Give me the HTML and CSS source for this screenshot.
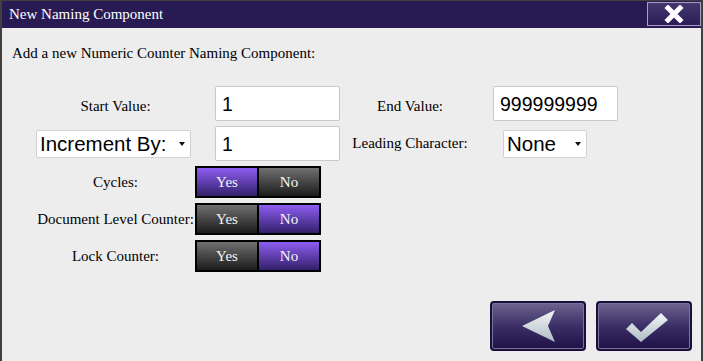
FILE: index.html
```html
<!DOCTYPE html>
<html lang="en">
  <head>
    <meta charset="UTF-8" />
    <title>New Naming Component</title>
    <link rel="stylesheet" href="styles.css">
  </head>
  <body>
    <div class="dialog">
      <div class="titlebar">
        <span class="title">New Naming Component</span>
        <button class="close-btn" title="Close">
          <svg width="20" height="18" viewBox="0 0 20 18">
            <path d="M4 3 L16 15 M16 3 L4 15" stroke="#fff" stroke-width="5" stroke-linecap="square" />
          </svg>
        </button>
      </div>

      <div class="content">
        <p class="intro">Add a new Numeric Counter Naming Component:</p>

        <div class="form-grid">
          <label class="lbl lbl-low">Start Value:</label>
          <input class="num-input" type="text" value="1" />
          <label class="lbl lbl-right lbl-low">End Value:</label>
          <input class="num-input num-last" type="text" value="999999999" />

          <div class="select-wrap select-wide">
            <select>
              <option>Increment By:</option>
              <option>Decrement By:</option>
            </select>
          </div>
          <input class="num-input" type="text" value="1" />
          <label class="lbl lbl-right">Leading Character:</label>
          <div class="select-wrap select-small">
            <select>
              <option>None</option>
              <option>0</option>
            </select>
          </div>

          <label class="lbl">Cycles:</label>
          <div class="toggle">
            <button class="on">Yes</button>
            <button>No</button>
          </div>

          <label class="lbl">Document Level Counter:</label>
          <div class="toggle">
            <button>Yes</button>
            <button class="on">No</button>
          </div>

          <label class="lbl">Lock Counter:</label>
          <div class="toggle">
            <button>Yes</button>
            <button class="on">No</button>
          </div>
        </div>
      </div>

      <div class="footer">
        <button class="big-btn" title="Back">
          <svg width="92" height="46" viewBox="0 0 92 46">
            <defs>
              <linearGradient id="gBack" x1="0" y1="0" x2="0" y2="1">
                <stop offset="0" stop-color="#f2f6f8" />
                <stop offset="1" stop-color="#aebcc4" />
              </linearGradient>
            </defs>
            <polygon points="30,23 63,7 56,23 63,39" fill="url(#gBack)" />
          </svg>
        </button>
        <button class="big-btn" title="OK">
          <svg width="92" height="46" viewBox="0 0 92 46">
            <defs>
              <linearGradient id="gOk" x1="0" y1="0" x2="0" y2="1">
                <stop offset="0" stop-color="#f2f6f8" />
                <stop offset="1" stop-color="#aebcc4" />
              </linearGradient>
            </defs>
            <polygon points="28,26 34,20 43,29 63,10 70,17 43,39" fill="url(#gOk)" />
          </svg>
        </button>
      </div>
    </div>
  </body>
</html>
```

FILE: styles.css
```css
body {
  margin: 0;
  background-color: #404040;
  font-family: "Liberation Serif", "Times New Roman", serif;
}

.dialog {
  margin: 1px 0 0 2px;
  width: 699px;
  height: 360px;
  background: #ededed;
  display: flex;
  flex-direction: column;
}

.titlebar {
  height: 27px;
  background: #281a52;
  display: flex;
  justify-content: space-between;
  align-items: flex-start;
}

.title {
  color: white;
  font-size: 15px;
  padding: 5px 0 0 7px;
}

.close-btn {
  margin-top: 1px;
  width: 54px;
  height: 24px;
  border: 1px solid #a79ec0;
  background: linear-gradient(#43376e, #2b1e57);
  padding: 0;
  display: flex;
  align-items: center;
  justify-content: center;
  cursor: pointer;
}

.content {
  padding: 17px 0 0 10px;
}

.intro {
  margin: 0;
  font-size: 15px;
}

.form-grid {
  margin-top: 24px;
  margin-left: 24px;
  display: grid;
  grid-template-columns: 159px 155px 143px auto;
  row-gap: 5px;
  align-items: center;
}

.lbl {
  font-size: 15px;
  text-align: center;
  white-space: nowrap;
}

.lbl-low {
  padding-top: 5px;
}

.lbl-right {
  padding-right: 23px;
}

.num-input {
  box-sizing: border-box;
  height: 35px;
  width: 125px;
  margin-left: 20px;
  border: 1px solid #c9c9c9;
  border-radius: 2px;
  background: white;
  padding: 2px 6px 0;
  font-family: "Liberation Sans", Arial, sans-serif;
  font-size: 19.5px;
  color: #000;
  outline: none;
}

.num-last {
  margin-left: 0;
}

.select-wrap {
  position: relative;
  box-sizing: border-box;
  height: 28px;
}

.select-wrap select {
  appearance: none;
  -webkit-appearance: none;
  box-sizing: border-box;
  width: 100%;
  height: 100%;
  border: 1px solid #d0d0d0;
  border-radius: 2px;
  background: white;
  padding: 0 3px;
  font-family: "Liberation Sans", Arial, sans-serif;
  font-size: 20.5px;
  color: #000;
  outline: none;
}

.select-wrap::after {
  content: "";
  position: absolute;
  right: 6px;
  top: 12px;
  border-left: 3.5px solid transparent;
  border-right: 3.5px solid transparent;
  border-top: 4px solid #111;
  pointer-events: none;
}

.select-wide {
  width: 155px;
}

.select-small {
  width: 84px;
  margin-left: 10px;
}

.toggle {
  grid-column: 2 / -1;
  justify-self: start;
  display: flex;
  width: 126px;
  height: 32px;
  box-sizing: border-box;
  border: 2px solid #000;
  background: #000;
  gap: 2px;
}

.toggle button {
  flex: 1;
  border: none;
  padding: 0;
  color: #f4f4f4;
  font-family: "Liberation Serif", "Times New Roman", serif;
  font-size: 15px;
  background: linear-gradient(#707070, #1b1b1b);
  cursor: pointer;
}

.toggle button.on {
  background: linear-gradient(#8d5df2, #33206a);
}

.footer {
  margin-top: auto;
  display: flex;
  justify-content: flex-end;
  gap: 10px;
  padding: 0 9px 10px 0;
}

.big-btn {
  box-sizing: border-box;
  width: 96px;
  height: 50px;
  border: 2px solid #1a0e3c;
  border-radius: 4px;
  box-shadow: inset 0 0 0 1px #7d7398;
  background: linear-gradient(#6e6390, #3b2f66 50%, #1d1148);
  padding: 0;
  display: flex;
  align-items: center;
  justify-content: center;
  cursor: pointer;
}
```
